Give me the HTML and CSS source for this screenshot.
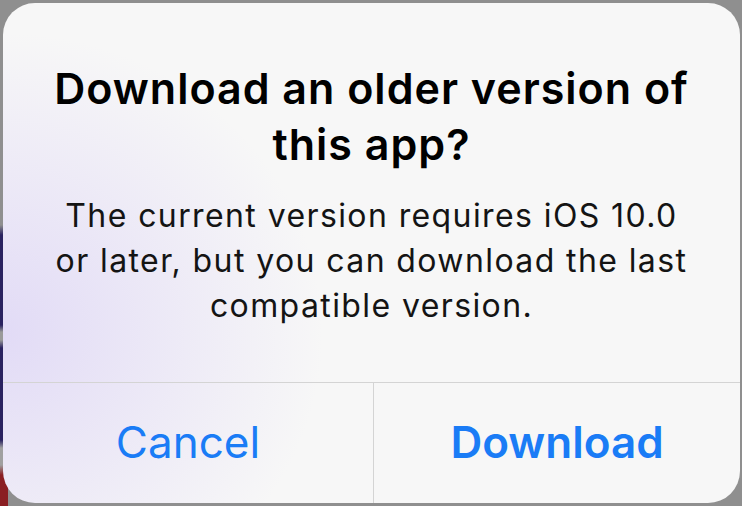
FILE: index.html
```html
<!DOCTYPE html>
<html lang="en">
<head>
    <meta charset="UTF-8">
    <meta name="viewport" content="width=device-width, initial-scale=1.0">
    <title>Download older version</title>
    <link rel="stylesheet" href="styles.css">
</head>
<body>

    <div class="alert">
        <div class="alert-body">
            <h2 class="alert-title">Download an older version of this app?</h2>
            <p class="alert-message">The current version requires iOS 10.0 or later, but you can download the last compatible version.</p>
        </div>
        <div class="alert-actions">
            <button class="action">Cancel</button>
            <button class="action primary">Download</button>
        </div>
    </div>

</body>
</html>
```

FILE: styles.css
```css
html, body {
    height: 100%;
}
body {
    margin: 0;
    padding: 3px 2px 3px 3px;
    box-sizing: border-box;
    font-family: Inter, "Noto Sans", sans-serif;
    background-color: #8f8f8f;
    background-image: linear-gradient(to bottom,
        #8f8f8f 0, #8f8f8f 225px,
        #2a2260 235px, #2a2260 325px,
        #9a9a9a 332px, #9a9a9a 340px,
        #2a2260 348px, #2a2260 440px,
        #a0a0a0 448px, #a0a0a0 465px,
        #8a1e22 475px, #8a1e22 100%);
    background-size: 8px 100%, 100% 100%;
    background-repeat: no-repeat;
}
.alert {
    height: 100%;
    display: flex;
    flex-direction: column;
    border-radius: 32px;
    overflow: hidden;
    background-color: #f7f7f7;
    background-image: radial-gradient(ellipse 320px 300px at 0 330px, rgba(222, 214, 246, 0.85), rgba(247, 247, 247, 0));
}
.alert-body {
    flex: 1;
    padding: 57px 40px 0 40px;
    text-align: center;
}
.alert-title {
    margin: 0 auto;
    max-width: 660px;
    font-size: 43px;
    font-weight: 600;
    line-height: 56px;
    letter-spacing: 1px;
    color: #000;
}
.alert-message {
    margin: 21px auto 0 auto;
    max-width: 650px;
    font-size: 32px;
    font-weight: 400;
    line-height: 45px;
    letter-spacing: 1.4px;
    color: #141414;
}
.alert-actions {
    display: flex;
    height: 120px;
    border-top: 1px solid #d4d4d4;
}
.action {
    flex: 1;
    border: none;
    background: transparent;
    font-family: inherit;
    font-size: 44px;
    font-weight: 400;
    color: #1a7cf6;
    padding: 0 0 3px 0;
}
.action:first-child {
    flex: 0 0 370px;
}
.action + .action {
    border-left: 1px solid #d4d4d4;
}
.action.primary {
    font-weight: 600;
}
```
